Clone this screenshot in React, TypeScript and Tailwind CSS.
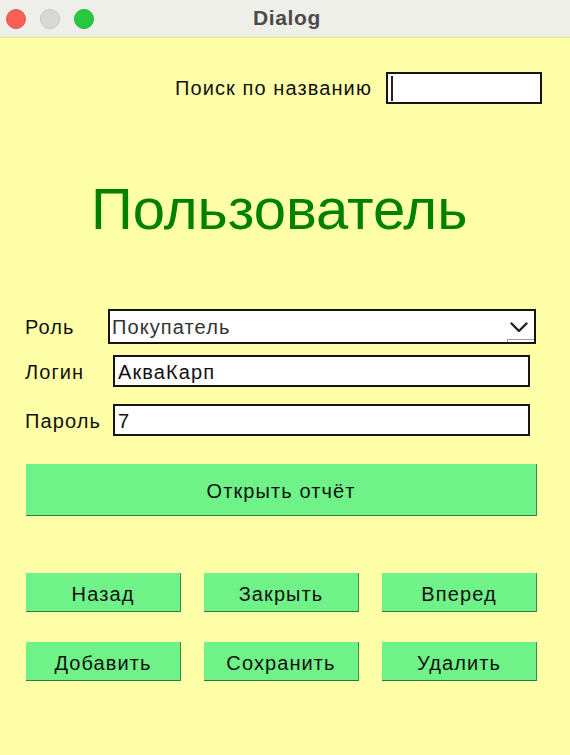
import React from "react";

const font = { fontFamily: '"Liberation Sans", Arial, sans-serif' };
const t = "text-[20px] tracking-[1.1px]";

function GreenButton({ children, className = "" }: { children: React.ReactNode; className?: string }) {
  return (
    <div
      className={
        "flex items-center justify-center pt-[3px] bg-[#6ff288] border-b-[1.5px] border-r border-b-[#2f7a3c] border-r-[#3f8a4c] text-[#111] " +
        t +
        " " +
        className
      }
    >
      {children}
    </div>
  );
}

export default function App() {
  return (
    <div className="w-[570px] h-[755px] flex flex-col bg-[#ffffa7] overflow-hidden" style={font}>
      {/* Title bar */}
      <div className="relative h-[38px] shrink-0 bg-[#efefea] border-b border-[#ede48a] flex items-center">
        <div className="flex items-center gap-[14px] pl-[6px]">
          <div className="w-[20px] h-[20px] rounded-full bg-[#fe5f57] border border-[#e9514a]" />
          <div className="w-[20px] h-[20px] rounded-full bg-[#d8d8d4] border border-[#c6c6c2]" />
          <div className="w-[20px] h-[20px] rounded-full bg-[#28c840] border border-[#22b237]" />
        </div>
        <div className="absolute inset-0 flex items-center justify-center pb-[2px] pl-[4px]">
          <span className="text-[21px] tracking-[0.6px] font-bold text-[#4b4b4b]">Dialog</span>
        </div>
      </div>

      {/* Search row */}
      <div className="mt-[34px] h-[32px] flex items-center justify-end pr-[28px]">
        <span className={"text-[#111] mr-[14px] " + t}>Поиск по названию</span>
        <div className="w-[156px] h-[32px] bg-white border-2 border-[#151515] flex items-center pl-[3px]">
          <div className="w-[2px] h-[25px] bg-[#222]" />
        </div>
      </div>

      {/* Big title */}
      <div className="mt-[76px] h-[57px] pl-[91px] text-[58px] leading-[57px] text-[#008000]">Пользователь</div>

      {/* Role */}
      <div className="mt-[72px] h-[35px] flex items-center pl-[25px]">
        <span className={"w-[83px] text-[#111] pt-[1px] " + t}>Роль</span>
        <div className="relative w-[428px] h-[35px] bg-white border-2 border-[#151515] flex items-center pl-[2px]">
          <span className={"text-[#333] pt-[1px] " + t}>Покупатель</span>
          <svg className="absolute right-[6px] top-[11px]" width="18" height="11" viewBox="0 0 18 11">
            <path d="M1.5 1.5 L9 9 L16.5 1.5" fill="none" stroke="#222" strokeWidth="2.4" strokeLinecap="round" strokeLinejoin="round" />
          </svg>
          <div className="absolute right-0 bottom-0 w-[27px] h-[3px] border-t border-l border-[#9a9a9a]" />
        </div>
      </div>

      {/* Login */}
      <div className="mt-[11px] h-[32px] flex items-center pl-[25px]">
        <span className={"w-[88px] text-[#111] pt-[1px] " + t}>Логин</span>
        <div className="w-[417px] h-[32px] bg-white border-2 border-[#151515] flex items-center pl-[3px]">
          <span className={"text-[#111] pt-[1px] " + t}>АкваКарп</span>
        </div>
      </div>

      {/* Password */}
      <div className="mt-[17px] h-[32px] flex items-center pl-[25px]">
        <span className={"w-[88px] text-[#111] pt-[1px] " + t}>Пароль</span>
        <div className="w-[417px] h-[32px] bg-white border-2 border-[#151515] flex items-center pl-[3px]">
          <span className={"text-[#111] pt-[1px] " + t}>7</span>
        </div>
      </div>

      {/* Open report */}
      <div className="mt-[28px] pl-[26px]">
        <GreenButton className="w-[511px] h-[52px]">Открыть отчёт</GreenButton>
      </div>

      {/* Nav buttons */}
      <div className="mt-[57px] ml-[26px] w-[511px] grid grid-cols-3 gap-x-[23px] gap-y-[30px]">
        <GreenButton className="h-[39px]">Назад</GreenButton>
        <GreenButton className="h-[39px]">Закрыть</GreenButton>
        <GreenButton className="h-[39px]">Вперед</GreenButton>
        <GreenButton className="h-[39px]">Добавить</GreenButton>
        <GreenButton className="h-[39px]">Сохранить</GreenButton>
        <GreenButton className="h-[39px]">Удалить</GreenButton>
      </div>
    </div>
  );
}
